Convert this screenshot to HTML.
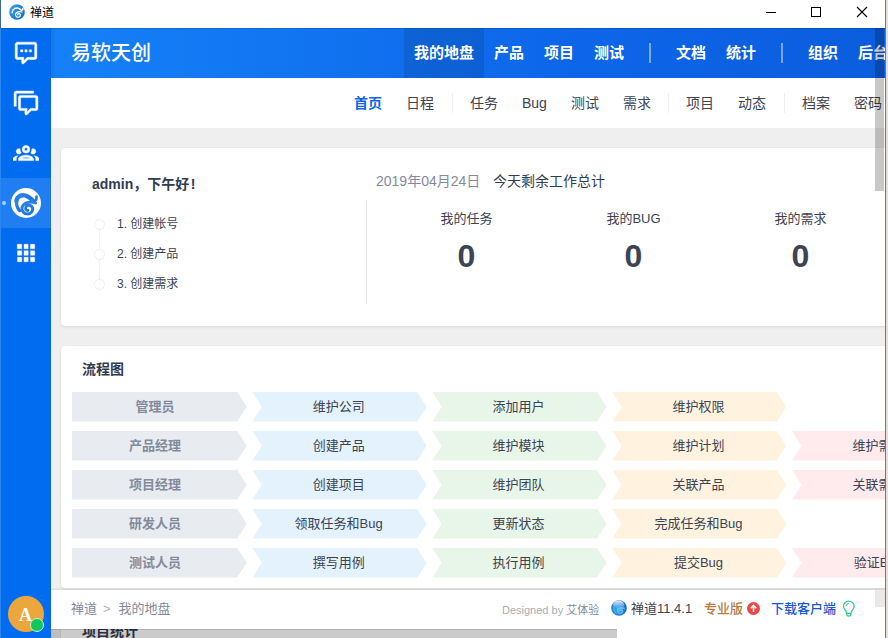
<!DOCTYPE html>
<html lang="zh-CN">
<head>
<meta charset="utf-8">
<title>禅道</title>
<style>
*{box-sizing:border-box;margin:0;padding:0}
html,body{width:888px;height:638px;overflow:hidden;background:#fff}
body{position:relative;font-family:"Liberation Sans","Noto Sans CJK SC",sans-serif;font-size:13px;color:#3c4353}
.a{position:absolute}
.t{position:absolute;white-space:nowrap;height:20px;line-height:20px}
.c{text-align:center}
b,.b{font-weight:bold}

/* window chrome */
#titlebar{left:0;top:0;width:888px;height:28px;background:#fff}
#wl{left:0;top:0;width:1px;height:28px;background:#44689c}
#wr{left:885px;top:0;width:1px;height:638px;background:#3b82d8}
#wo{left:886px;top:0;width:2px;height:638px;background:#e6e1dc}

/* sidebar */
#side{left:0;top:28px;width:51px;height:610px;background:#026cf1;z-index:5}
#side .edge{left:0;top:0;width:1px;height:610px;background:#2a86f0}
#side .sh{left:50px;top:0;width:1px;height:610px;background:rgba(0,0,0,.06)}
#side .act{left:0;top:150px;width:51px;height:50px;background:rgba(255,255,255,.12)}
#side svg.i{position:absolute;left:13px;width:26px;height:26px;fill:#fff;stroke:#fff;stroke-width:.45;stroke-linejoin:round}

/* header */
#head{left:51px;top:28px;width:834px;height:50px;background:linear-gradient(90deg,#1581f8 0,#0d66e9 62%,#0b5ddd 100%)}
#head .t{color:#fff;font-size:15px;top:15px}
#head .sep{top:15px;width:2px;height:20px;background:rgba(255,255,255,.45)}

/* subnav */
#sub{left:51px;top:78px;width:834px;height:50px;background:#fff}
#sub .t{font-size:14px;top:15px;color:#3c4353}
#sub .sep{top:15px;width:1px;height:20px;background:#eee}

/* main */
#main{left:51px;top:128px;width:834px;height:510px;background:#efefef;overflow:hidden}
.card{position:absolute;background:#fff;border-radius:4px;box-shadow:0 1px 3px rgba(0,0,0,.09),0 0 1px rgba(0,0,0,.05)}

/* flow */
.fi{position:absolute;height:29.5px;width:174.2px;line-height:30px;font-size:13px;color:#3c4353;white-space:nowrap}
.fi i{position:absolute;left:0;top:0;width:100%;height:100%;clip-path:polygon(0 0,164.8px 0,174.2px 50%,164.8px 100%,0 100%,9.4px 50%)}
.fi.f0{width:174.8px}
.fi.f0 i{clip-path:polygon(0 0,165.2px 0,174.8px 50%,165.2px 100%,0 100%)}
.fi>span{position:absolute;left:0;top:0;width:172.6px;text-align:center}
.fi.f0>span{width:165.8px;font-weight:bold;color:#838a9d}
.f0 i{background:#e8ebef}.f1 i{background:#e3f2fd}.f2 i{background:#e8f5e9}.f3 i{background:#fff3e0}.f4 i{background:#ffebee}

/* footer */
#foot{left:51px;top:590px;width:834px;height:39px;background:#fff;box-shadow:0 -1px 2px rgba(0,0,0,.10)}
#foot .t{font-size:13px;top:9px}
</style>
</head>
<body>

<!-- ===== window title bar ===== -->
<div class="a" id="titlebar">
  <svg class="a" style="left:9px;top:4px;width:16px;height:16px" viewBox="0 0 32 32">
    <defs><linearGradient id="lg1" x1="0" y1="0" x2="1" y2="1"><stop offset="0" stop-color="#38a4f4"/><stop offset="1" stop-color="#0b63d8"/></linearGradient></defs>
    <circle cx="16" cy="16" r="15.6" fill="url(#lg1)"/>
    <path d="M6.5 17.5C6.5 11.5 11 8 16.5 8C21.5 8 22.5 12.5 25.5 12.5C27 12.5 27.8 11.3 27.6 9.2" fill="none" stroke="#fff" stroke-width="3.2" stroke-linecap="round"/>
    <path d="M26 16C21 14 14 15.5 13 20.5C12.2 25 17 27.5 20.5 26C23.5 24.5 23.5 20.5 21 19.3C19 18.5 17 19.8 17.5 21.8" fill="none" stroke="#fff" stroke-width="2.6" stroke-linecap="round"/>
  </svg>
  <div class="t" style="left:30px;top:3px;font-size:12px;color:#000">禅道</div>
  <div class="a" style="left:766px;top:12px;width:10px;height:1px;background:#000"></div>
  <div class="a" style="left:811px;top:7px;width:10px;height:10px;border:1px solid #000"></div>
  <svg class="a" style="left:856px;top:6px;width:12px;height:12px" viewBox="0 0 12 12"><path d="M1 1L11 11M11 1L1 11" stroke="#000" stroke-width="1.1" fill="none"/></svg>
</div>
<div class="a" id="wl"></div>

<!-- ===== sidebar ===== -->
<div class="a" id="side">
  <div class="a act"></div>
  <div class="a edge"></div>
  <div class="a sh"></div>
  <svg class="i" style="top:12px" viewBox="0 0 24 24"><path d="M9,22A1,1 0 0,1 8,21V18H4A2,2 0 0,1 2,16V4C2,2.89 2.9,2 4,2H20A2,2 0 0,1 22,4V16A2,2 0 0,1 20,18H13.9L10.2,21.71C10,21.9 9.75,22 9.5,22V22H9M10,16V19.08L13.08,16H20V4H4V16H10M17,11H15V9H17V11M13,11H11V9H13V11M9,11H7V9H9V11Z"/></svg>
  <svg class="i" style="top:62px" viewBox="0 0 24 24"><path d="M12,23A1,1 0 0,1 11,22V19H7A2,2 0 0,1 5,17V7A2,2 0 0,1 7,5H21A2,2 0 0,1 23,7V17A2,2 0 0,1 21,19H16.9L13.2,22.71C13,22.89 12.76,23 12.5,23H12M13,17V20.08L16.08,17H21V7H7V17H13M3,15H1V3A2,2 0 0,1 3,1H19V3H3V15Z"/></svg>
  <svg class="i" style="top:112px" viewBox="0 0 24 24"><path d="M12,5A3.5,3.5 0 0,0 8.5,8.5A3.5,3.5 0 0,0 12,12A3.5,3.5 0 0,0 15.5,8.5A3.5,3.5 0 0,0 12,5M12,7A1.5,1.5 0 0,1 13.5,8.5A1.5,1.5 0 0,1 12,10A1.5,1.5 0 0,1 10.5,8.5A1.5,1.5 0 0,1 12,7M5.5,8A2.5,2.5 0 0,0 3,10.5C3,11.44 3.53,12.25 4.29,12.68C4.65,12.88 5.06,13 5.5,13C5.94,13 6.35,12.88 6.71,12.68C7.08,12.47 7.39,12.17 7.62,11.81C6.89,10.86 6.5,9.7 6.5,8.5C6.5,8.41 6.5,8.31 6.5,8.22C6.2,8.08 5.86,8 5.5,8M18.5,8C18.14,8 17.8,8.08 17.5,8.22C17.5,8.31 17.5,8.41 17.5,8.5C17.5,9.7 17.11,10.86 16.38,11.81C16.5,12 16.63,12.15 16.78,12.3C16.94,12.45 17.1,12.58 17.29,12.68C17.65,12.88 18.06,13 18.5,13C18.94,13 19.35,12.88 19.71,12.68C20.47,12.25 21,11.44 21,10.5A2.5,2.5 0 0,0 18.5,8M12,14C9.66,14 5,15.17 5,17.5V19H19V17.5C19,15.17 14.34,14 12,14M4.71,14.55C2.78,14.78 0,15.76 0,17.5V19H3V17.07C3,16.06 3.69,15.22 4.71,14.55M19.29,14.55C20.31,15.22 21,16.06 21,17.07V19H24V17.5C24,15.76 21.22,14.78 19.29,14.55M12,16C13.53,16 15.24,16.5 16.23,17H7.77C8.76,16.5 10.47,16 12,16Z"/></svg>
  <!-- zentao logo (active) -->
  <div class="a" style="left:2px;top:173px;width:4px;height:4px;border-radius:50%;background:#a9cbfa"></div>
  <svg class="a" style="left:11px;top:160px;width:30px;height:30px" viewBox="0 0 30 30">
    <defs><linearGradient id="lg2" x1="0" y1="0" x2="1" y2="1"><stop offset="0" stop-color="#2b83ee"/><stop offset="1" stop-color="#1a6fe6"/></linearGradient></defs>
    <circle cx="15" cy="15" r="15" fill="#fff"/>
    <g fill="none" stroke="url(#lg2)" stroke-linecap="round">
    <path d="M5.4 13.2C5.8 8.6 9.6 6.9 13.6 7.3C17.6 7.7 19.4 10.4 21.4 12.2" stroke-width="4.3"/>
    <path d="M21.2 12.2C23.4 13.9 25.9 12.6 25.5 8.7" stroke-width="2.7"/>
    <path d="M5.6 13.6C5.4 17 6.2 20.4 8.6 22.6" stroke-width="3.2"/>
    <path d="M24.6 15C21 13.5 15 13.8 12.3 17C9.6 20.2 11.2 25.4 15.8 25.9C20.4 26.3 23 22 21 18.9C19.4 16.6 15.8 16.8 14.8 19.2C14 21.2 15.4 22.8 17 22.4" stroke-width="2.9"/>
    </g>
  </svg>
  <svg class="i" style="top:212px" viewBox="0 0 24 24"><path d="M16,20H20V16H16M16,14H20V10H16M10,8H14V4H10M16,8H20V4H16M10,14H14V10H10M4,14H8V10H4M4,20H8V16H4M10,20H14V16H10M4,8H8V4H4V8Z"/></svg>
  <!-- avatar -->
  <div class="a" style="left:8px;top:568px;width:36px;height:36px;border-radius:50%;background:#eca73c"></div>
  <div class="t c" style="left:8px;top:577px;width:35px;font-family:'Liberation Serif',serif;font-size:18px;font-weight:bold;color:#fff">A</div>
  <div class="a" style="left:30px;top:590px;width:14px;height:14px;border-radius:50%;background:#10c85a;border:1px solid #b8f5dc"></div>
</div>

<!-- ===== header ===== -->
<div class="a" id="head">
  <div class="a" style="left:0;top:0;width:6px;height:50px;background:linear-gradient(90deg,rgba(0,0,0,.07),rgba(0,0,0,0))"></div>
  <div class="t" style="left:20px;top:15px;font-size:20px;font-weight:500">易软天创</div>
  <div class="a" style="left:353px;top:0;width:80px;height:50px;background:rgba(0,0,0,.10)"></div>
  <div class="t" style="left:363px;font-weight:bold">我的地盘</div>
  <div class="t" style="left:443px;font-weight:bold">产品</div>
  <div class="t" style="left:493px;font-weight:bold">项目</div>
  <div class="t" style="left:543px;font-weight:bold">测试</div>
  <div class="a sep" style="left:598px"></div>
  <div class="t" style="left:625px;font-weight:bold">文档</div>
  <div class="t" style="left:675px;font-weight:bold">统计</div>
  <div class="a sep" style="left:730px"></div>
  <div class="t" style="left:757px;font-weight:bold">组织</div>
  <div class="t" style="left:807px;font-weight:bold">后台</div>
</div>

<!-- ===== sub nav ===== -->
<div class="a" id="sub">
  <div class="t" style="left:303px;color:#0c64eb;font-weight:bold">首页</div>
  <div class="t" style="left:355px">日程</div>
  <div class="a sep" style="left:401px"></div>
  <div class="t" style="left:419px">任务</div>
  <div class="t" style="left:471px">Bug</div>
  <div class="t" style="left:520px">测试</div>
  <div class="t" style="left:572px">需求</div>
  <div class="a sep" style="left:617px"></div>
  <div class="t" style="left:635px">项目</div>
  <div class="t" style="left:687px">动态</div>
  <div class="a sep" style="left:733px"></div>
  <div class="t" style="left:751px">档案</div>
  <div class="t" style="left:803px">密码</div>
</div>

<!-- ===== main content ===== -->
<div class="a" id="main">
  <div class="card" style="left:10px;top:20px;width:932px;height:178px">
    <div class="t" style="left:31px;top:26px;font-size:14px;font-weight:bold;color:#313c52">admin，下午好<span style="margin-left:1.5px">!</span></div>
    <div class="a" style="left:38px;top:75px;width:1px;height:60px;background:#f1f1f1"></div>
    <div class="a" style="left:33px;top:70.5px;width:11px;height:11px;border-radius:50%;border:1px solid #efefef;background:#fff"></div>
    <div class="a" style="left:33px;top:100.5px;width:11px;height:11px;border-radius:50%;border:1px solid #efefef;background:#fff"></div>
    <div class="a" style="left:33px;top:130.5px;width:11px;height:11px;border-radius:50%;border:1px solid #efefef;background:#fff"></div>
    <div class="t" style="left:56px;top:66px;font-size:12px">1. 创建帐号</div>
    <div class="t" style="left:56px;top:96px;font-size:12px">2. 创建产品</div>
    <div class="t" style="left:56px;top:126px;font-size:12px">3. 创建需求</div>
    <div class="a" style="left:305px;top:52px;width:1px;height:104px;background:#e8e8e8"></div>
    <div class="t" style="left:315px;top:23px;font-size:14px;color:#838a9d">2019年04月24日</div>
    <div class="t" style="left:432px;top:23px;font-size:14px;color:#313c52">今天剩余工作总计</div>
    <div class="t c" style="left:322px;top:61px;width:167px">我的任务</div>
    <div class="t c" style="left:489px;top:61px;width:167px">我的BUG</div>
    <div class="t c" style="left:656px;top:61px;width:167px">我的需求</div>
    <div class="t c b" style="left:322px;top:88.4px;width:167px;font-size:32px;height:40px;line-height:40px">0</div>
    <div class="t c b" style="left:489px;top:88.4px;width:167px;font-size:32px;height:40px;line-height:40px">0</div>
    <div class="t c b" style="left:656px;top:88.4px;width:167px;font-size:32px;height:40px;line-height:40px">0</div>
  </div>
  <div class="card" style="left:10px;top:218px;width:932px;height:242px">
    <div class="t" style="left:21px;top:13px;font-size:14px;font-weight:bold;color:#313c52">流程图</div>
    <div class="fi f0" style="left:11.00px;top:46px"><i></i><span>管理员</span></div>
    <div class="fi f1" style="left:191.40px;top:46px"><i></i><span>维护公司</span></div>
    <div class="fi f2" style="left:371.30px;top:46px"><i></i><span>添加用户</span></div>
    <div class="fi f3" style="left:551.20px;top:46px"><i></i><span>维护权限</span></div>
    <div class="fi f0" style="left:11.00px;top:85px"><i></i><span>产品经理</span></div>
    <div class="fi f1" style="left:191.40px;top:85px"><i></i><span>创建产品</span></div>
    <div class="fi f2" style="left:371.30px;top:85px"><i></i><span>维护模块</span></div>
    <div class="fi f3" style="left:551.20px;top:85px"><i></i><span>维护计划</span></div>
    <div class="fi f4" style="left:731.10px;top:85px"><i></i><span>维护需求</span></div>
    <div class="fi f0" style="left:11.00px;top:124px"><i></i><span>项目经理</span></div>
    <div class="fi f1" style="left:191.40px;top:124px"><i></i><span>创建项目</span></div>
    <div class="fi f2" style="left:371.30px;top:124px"><i></i><span>维护团队</span></div>
    <div class="fi f3" style="left:551.20px;top:124px"><i></i><span>关联产品</span></div>
    <div class="fi f4" style="left:731.10px;top:124px"><i></i><span>关联需求</span></div>
    <div class="fi f0" style="left:11.00px;top:163px"><i></i><span>研发人员</span></div>
    <div class="fi f1" style="left:191.40px;top:163px"><i></i><span>领取任务和Bug</span></div>
    <div class="fi f2" style="left:371.30px;top:163px"><i></i><span>更新状态</span></div>
    <div class="fi f3" style="left:551.20px;top:163px"><i></i><span>完成任务和Bug</span></div>
    <div class="fi f0" style="left:11.00px;top:202px"><i></i><span>测试人员</span></div>
    <div class="fi f1" style="left:191.40px;top:202px"><i></i><span>撰写用例</span></div>
    <div class="fi f2" style="left:371.30px;top:202px"><i></i><span>执行用例</span></div>
    <div class="fi f3" style="left:551.20px;top:202px"><i></i><span>提交Bug</span></div>
    <div class="fi f4" style="left:731.10px;top:202px"><i></i><span>验证Bug</span></div>
  </div>
  <div class="card" style="left:10px;top:480px;width:932px;height:100px">
    <div class="t" style="left:21px;top:13px;font-size:14px;font-weight:bold;color:#313c52">项目统计</div>
  </div>
</div>

<!-- ===== footer ===== -->
<div class="a" id="foot">
  <div class="t" style="left:20px;color:#838a9d">禅道<span style="color:#b0b4bf;margin:0 8px 0 6px">&gt;</span>我的地盘</div>
  <div class="t" style="left:451px;top:9.5px;font-size:11px;color:#a9acb5">Designed by <span style="color:#838a9d">艾体验</span></div>
  <svg class="a" style="left:560px;top:10px;width:16px;height:16px" viewBox="0 0 32 32">
    <defs><radialGradient id="rg1" cx=".42" cy=".55" r=".62"><stop offset="0" stop-color="#3aa6e6"/><stop offset=".6" stop-color="#2385d6"/><stop offset="1" stop-color="#1a55b4"/></radialGradient>
    <linearGradient id="lg3" x1="0" y1="0" x2="0" y2="1"><stop offset="0" stop-color="#eef1fd" stop-opacity="1"/><stop offset=".55" stop-color="#b9d2f6" stop-opacity=".55"/><stop offset="1" stop-color="#9cc4f2" stop-opacity="0"/></linearGradient></defs>
    <circle cx="16" cy="16" r="15.6" fill="url(#rg1)"/>
    <ellipse cx="15" cy="9.5" rx="11.5" ry="8.5" fill="url(#lg3)"/>
    <path d="M5.5 16C7 20 6.5 23.5 10 26.5" fill="none" stroke="#7fe0f6" stroke-width="3" stroke-linecap="round" opacity=".4"/>
    <path d="M26 16.5C21 14.5 14 16 13 20.5C12.2 25 17 27.5 20.5 26C23.5 24.5 23.5 20.5 21 19.3C19 18.5 17 19.8 17.5 21.8" fill="none" stroke="#7fe0f6" stroke-width="3.4" stroke-linecap="round" opacity=".6"/>
  </svg>
  <div class="t" style="left:580px;color:#3c4353">禅道11.4.1</div>
  <div class="t" style="left:653px;color:#b9783f;font-weight:500">专业版</div>
  <svg class="a" style="left:696px;top:12px;width:13px;height:13px" viewBox="0 0 13 13"><circle cx="6.5" cy="6.5" r="6.5" fill="#ea4747"/><path d="M6.5 10V3.6M3.8 6.2L6.5 3.4L9.2 6.2" fill="none" stroke="#fff" stroke-width="1.5"/></svg>
  <div class="t" style="left:720px;color:#1757d6;font-weight:500">下载客户端</div>
  <svg class="a" style="left:791px;top:9.5px;width:13.6px;height:17.3px" viewBox="0 0 15 19"><path d="M7.5 1.2C4.2 1.2 1.6 3.7 1.6 6.8C1.6 9.3 3.2 10.6 4.3 12.2C4.8 13 5 13.8 5 14.6H10C10 13.8 10.2 13 10.7 12.2C11.8 10.6 13.4 9.3 13.4 6.8C13.4 3.7 10.8 1.2 7.5 1.2Z M5.3 14.8V16.2C5.3 17.2 6.2 17.8 7.5 17.8C8.8 17.8 9.7 17.2 9.7 16.2V14.8" fill="none" stroke="#2fcc8e" stroke-width="1.4"/><path d="M4.6 6.2C4.9 4.9 5.8 4.1 7 3.9" fill="none" stroke="#2fcc8e" stroke-width="1.1" stroke-linecap="round"/></svg>
</div>

<!-- bottom strip + scrollbars -->
<div class="a" style="left:51px;top:629px;width:834px;height:9px;overflow:hidden"><div class="a" style="left:0;top:0;width:566px;height:9px;background:rgba(0,0,0,.205);border-top:1px solid rgba(0,0,0,.12)"></div></div>
<div class="a" style="left:875px;top:590px;width:10px;height:17px;background:#e9e9e9"></div>
<div class="a" style="left:875px;top:28px;width:9px;height:162.5px;background:rgba(0,0,0,.215)"></div>
<div class="a" style="left:0;top:28px;width:885px;height:1px;background:rgba(0,20,60,.16);z-index:6"></div>
<div class="a" id="wr"></div>
<div class="a" id="wo"></div>

</body>
</html>
